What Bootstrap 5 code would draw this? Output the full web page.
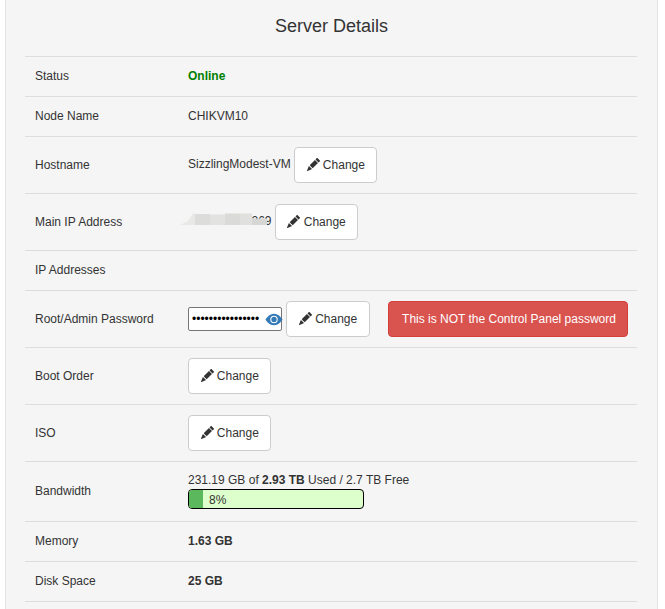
<!DOCTYPE html>
<html lang="en">
<head>
    <meta charset="UTF-8">
    <meta name="viewport" content="width=device-width, initial-scale=1.0">
    <title>Server Details</title>
    <link href="https://cdn.jsdelivr.net/npm/bootstrap@5.3.0/dist/css/bootstrap.min.css" rel="stylesheet">
    <style>
        html, body { height: 100%; overflow: hidden; }
        body { background: #fff; color: #333; font-family: "Liberation Sans", Arial, sans-serif; font-size: 12px; line-height: 17px; }
        .server-well { margin-left: 5px; width: 653px; height: 100%; padding: 0 19px; background: #f5f5f5; border-left: 1px solid #e3e3e3; border-right: 1px solid #e3e3e3; }
        .server-title { margin: 0; padding: 16px 0 20px; font-family: inherit; font-size: 18px; line-height: 20px; font-weight: 400; color: #333; }
        .details-table { --bs-table-bg: transparent; --bs-table-color: #333; table-layout: fixed; width: 612px; margin: 0; border-top: 1px solid #ddd; }
        .details-table > tbody > tr > td { padding: 11px 10px; border-bottom: 1px solid #ddd; font-size: 12px; line-height: 17px; white-space: nowrap; }
        .details-table > tbody > tr > td.btn-cell { padding: 10px; }
        .details-table > tbody > tr > td.bw-cell { padding: 10px 10px 12px; }
        .details-table .label-cell { width: 153px; }
        .state-online { color: #008000; font-weight: 700; }
        .change-btn { --bs-btn-padding-x: 12px; --bs-btn-padding-y: 8.5px; --bs-btn-font-size: 12px; --bs-btn-line-height: 17px; --bs-btn-border-radius: 4px; --bs-btn-color: #333; --bs-btn-bg: #fff; --bs-btn-border-color: #ccc; padding-right: 11.5px; vertical-align: middle; }
        .change-btn svg { width: 13px; height: 13px; margin-left: -.5px; fill: #333; vertical-align: -2px; }
        .warn-btn { --bs-btn-padding-x: 13px; --bs-btn-padding-y: 8.5px; --bs-btn-font-size: 12px; --bs-btn-line-height: 17px; --bs-btn-font-weight: 400; --bs-btn-border-radius: 4px; --bs-btn-bg: #d9534f; --bs-btn-border-color: #d43f3a; width: 240px; margin-left: 15px; vertical-align: middle; }
        .ip-masked { position: relative; display: inline-block; padding-left: 63.5px; }
        .ip-masked svg { position: absolute; left: -8px; top: -1px; }
        .pass-wrap { position: relative; display: inline-block; margin-right: 1px; vertical-align: middle; }
        .pass-input { display: block; width: 94px; height: 24px; padding: 1px 2px 1px 3px; background: #fff; border: 1px solid #767676; border-radius: 2px; font-family: inherit; font-size: 12px; color: #000; }
        .pass-eye { position: absolute; right: -1px; top: 3.5px; width: 18px; height: 17px; fill: #337ab7; }
        .bw-bar { --bs-progress-height: 20px; --bs-progress-bg: #dfc; --bs-progress-bar-bg: #5cb85c; --bs-progress-border-radius: 4px; position: relative; width: 176px; border: 1px solid #000; }
        .bw-label { position: absolute; left: 20px; top: 2px; color: #333; }
    </style>
</head>
<body>
    <svg width="0" height="0" class="d-block position-absolute">
        <symbol id="pencil" viewBox="0 0 16 16"><path d="M12.854.146a.5.5 0 0 0-.707 0L10.5 1.793 14.207 5.5l1.647-1.646a.5.5 0 0 0 0-.708l-3-3zm.646 6.061L9.793 2.5 3.293 9H3.5a.5.5 0 0 1 .5.5v.5h.5a.5.5 0 0 1 .5.5v.5h.5a.5.5 0 0 1 .5.5v.5h.5a.5.5 0 0 1 .5.5v.207l6.5-6.5zm-7.468 7.468A.5.5 0 0 1 6 13.5V13h-.5a.5.5 0 0 1-.5-.5V12h-.5a.5.5 0 0 1-.5-.5V11h-.5a.5.5 0 0 1-.5-.5V10h-.5a.499.499 0 0 1-.175-.032l-.179.178a.5.5 0 0 0-.11.168l-2 5a.5.5 0 0 0 .65.65l5-2a.5.5 0 0 0 .168-.11l.178-.178z"/></symbol>
    </svg>

    <div class="server-well">
        <h2 class="server-title text-center">Server Details</h2>

        <table class="table details-table align-middle">
            <tbody>
                <tr>
                    <td class="label-cell">Status</td>
                    <td><span class="state-online">Online</span></td>
                </tr>
                <tr>
                    <td>Node Name</td>
                    <td>CHIKVM10</td>
                </tr>
                <tr>
                    <td>Hostname</td>
                    <td class="btn-cell">SizzlingModest-VM <button type="button" class="btn change-btn"><svg><use href="#pencil"/></svg> Change</button></td>
                </tr>
                <tr>
                    <td>Main IP Address</td>
                    <td class="btn-cell">
                        <span class="ip-masked">269
                            <svg width="90" height="18" viewBox="0 0 90 18">
                                <path d="M0 13 L8 9 L13 1 L18 3 L25 2 V13 Z" fill="#e8e8e6"/>
                                <rect x="15" y="2" width="15" height="11" fill="#dcdcda"/>
                                <rect x="30" y="2.5" width="15" height="10.5" fill="#e2e2e0"/>
                                <rect x="45" y="1.5" width="15" height="11.5" fill="#dadad8"/>
                                <rect x="60" y="1.5" width="12" height="11.5" fill="#e0e0de"/>
                                <rect x="72" y="6.5" width="15" height="6.5" fill="#d6d6d4"/>
                            </svg>
                        </span>
                        <button type="button" class="btn change-btn"><svg><use href="#pencil"/></svg> Change</button>
                    </td>
                </tr>
                <tr>
                    <td>IP Addresses</td>
                    <td></td>
                </tr>
                <tr>
                    <td>Root/Admin Password</td>
                    <td class="btn-cell">
                        <span class="pass-wrap">
                            <input type="password" class="pass-input" value="abcdefghijklmnop" aria-label="Root password">
                            <svg class="pass-eye" viewBox="0 0 16 16"><path d="M10.5 8a2.5 2.5 0 1 1-5 0 2.5 2.5 0 0 1 5 0z"/><path d="M0 8s3-5.5 8-5.5S16 8 16 8s-3 5.5-8 5.5S0 8 0 8zm8 3.5a3.5 3.5 0 1 0 0-7 3.5 3.5 0 0 0 0 7z"/></svg>
                        </span>
                        <button type="button" class="btn change-btn"><svg><use href="#pencil"/></svg> Change</button>
                        <button type="button" class="btn btn-danger warn-btn">This is NOT the Control Panel password</button>
                    </td>
                </tr>
                <tr>
                    <td>Boot Order</td>
                    <td class="btn-cell"><button type="button" class="btn change-btn"><svg><use href="#pencil"/></svg> Change</button></td>
                </tr>
                <tr>
                    <td>ISO</td>
                    <td class="btn-cell"><button type="button" class="btn change-btn"><svg><use href="#pencil"/></svg> Change</button></td>
                </tr>
                <tr>
                    <td>Bandwidth</td>
                    <td class="bw-cell">
                        231.19 GB of <b>2.93 TB</b> Used / 2.7 TB Free
                        <div class="progress bw-bar">
                            <div class="progress-bar" style="width: 8%"></div>
                            <span class="bw-label">8%</span>
                        </div>
                    </td>
                </tr>
                <tr>
                    <td>Memory</td>
                    <td><b>1.63 GB</b></td>
                </tr>
                <tr>
                    <td>Disk Space</td>
                    <td><b>25 GB</b></td>
                </tr>
            </tbody>
        </table>
    </div>

    <script src="https://cdn.jsdelivr.net/npm/bootstrap@5.3.0/dist/js/bootstrap.bundle.min.js"></script>
</body>
</html>
